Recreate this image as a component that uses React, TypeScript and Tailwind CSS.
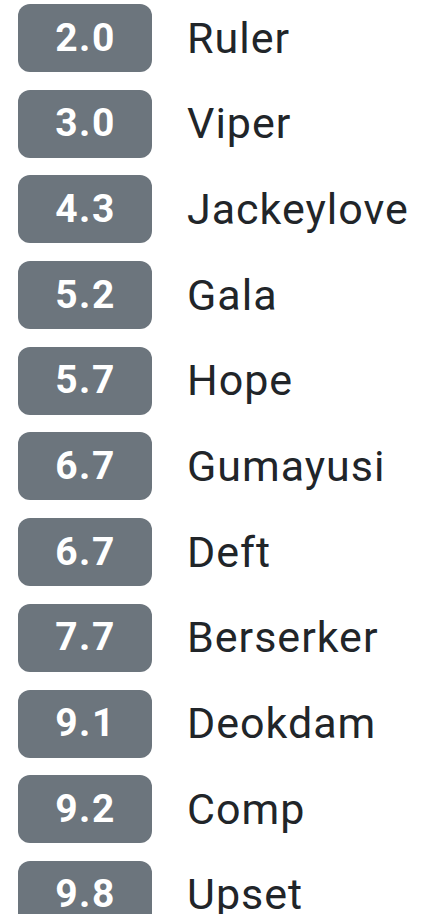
import React from "react";

const rows: [string, string][] = [
  ["2.0", "Ruler"],
  ["3.0", "Viper"],
  ["4.3", "Jackeylove"],
  ["5.2", "Gala"],
  ["5.7", "Hope"],
  ["6.7", "Gumayusi"],
  ["6.7", "Deft"],
  ["7.7", "Berserker"],
  ["9.1", "Deokdam"],
  ["9.2", "Comp"],
  ["9.8", "Upset"],
];

export default function App() {
  return (
    <div className="w-[448px] h-[924px] bg-white">
      <div
        className="h-[914px] overflow-hidden pl-[18px] pt-[4px] flex flex-col gap-[17.7px]"
        style={{ fontFamily: "Roboto, 'Liberation Sans', sans-serif" }}
      >
        {rows.map(([score, name], i) => (
          <div key={i} className="flex items-center shrink-0 h-[68px]">
            <div className="w-[134px] h-[68px] rounded-[12px] bg-[#6c757d] text-white font-bold text-[39px] tracking-[1.5px] pl-[1px] flex items-center justify-center leading-none">
              {score}
            </div>
            <div className="ml-[35px] text-[43px] tracking-[1px] text-[#212529] leading-none">
              {name}
            </div>
          </div>
        ))}
      </div>
    </div>
  );
}
